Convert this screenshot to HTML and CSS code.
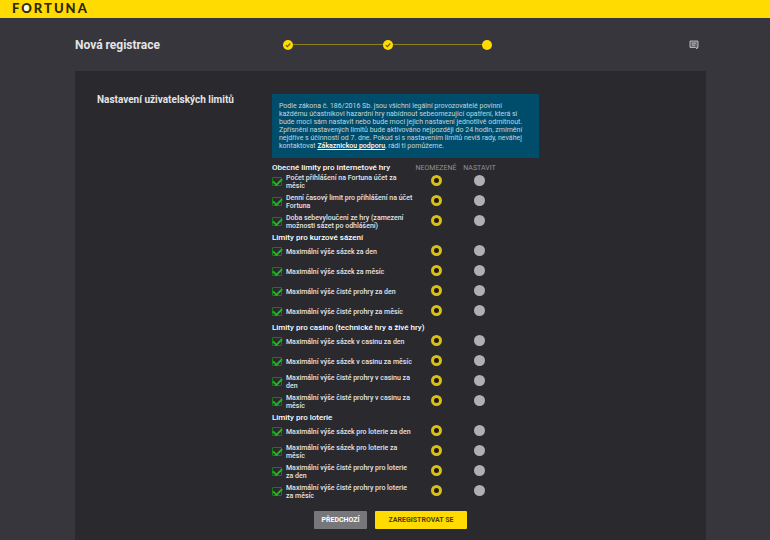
FILE: index.html
```html
<!DOCTYPE html>
<html lang="cs">
<head>
    <meta charset="UTF-8">
    <meta name="viewport" content="width=device-width, initial-scale=1.0">
    <title>Nová registrace</title>
    <link rel="stylesheet" href="styles.css">
</head>
<body>

<header class="topbar">
    <a href="#" class="logo">F<span class="logo-o">O</span>RTUNA</a>
</header>

<div class="page">
    <div class="page-head">
        <h1>Nová registrace</h1>
        <div class="steps">
            <svg class="step" viewBox="0 0 10 10"><circle cx="5" cy="5" r="5"/><path d="M2.8 5.2l1.5 1.5 3-3.2"/></svg>
            <span class="line"></span>
            <svg class="step" viewBox="0 0 10 10"><circle cx="5" cy="5" r="5"/><path d="M2.8 5.2l1.5 1.5 3-3.2"/></svg>
            <span class="line"></span>
            <svg class="step" viewBox="0 0 10 10"><circle cx="5" cy="5" r="5"/></svg>
        </div>
        <button type="button" class="chat" aria-label="Chat">
            <svg viewBox="0 0 10 10"><path d="M1 1h8v6.500H8V9L6.400 7.500H1z"/><path d="M3 3.200h4M3 5.200h3"/></svg>
        </button>
    </div>

    <form class="panel">
        <h2>Nastavení uživatelských limitů</h2>
        <div class="content">
            <p class="info">
                Podle zákona č. 186/2016 Sb. jsou všichni legální provozovatelé povinni<br>
                každému účastníkovi hazardní hry nabídnout sebeomezující opatření, která si<br>
                bude moci sám nastavit nebo bude moci jejich nastavení jednotlivě odmítnout.<br>
                Zpřísnění nastavených limitů bude aktivováno nejpozději do 24 hodin, zmírnění<br>
                nejdříve s účinností od 7. dne. Pokud si s nastavením limitů nevíš rady, neváhej<br>
                kontaktovat <a href="#">Zákaznickou podporu</a>, rádi ti pomůžeme.
            </p>

            <div class="group-head">
                <h3>Obecné limity pro internetové hry</h3>
                <span class="col">NEOMEZENĚ</span>
                <span class="col">NASTAVIT</span>
            </div>
            <div class="row">
                <input type="checkbox" id="l1" checked>
                <label for="l1">Počet přihlášení na Fortuna účet za<br>měsíc</label>
                <input type="radio" name="r1" aria-label="Neomezeně" checked>
                <input type="radio" name="r1" aria-label="Nastavit">
            </div>
            <div class="row">
                <input type="checkbox" id="l2" checked>
                <label for="l2">Denní časový limit pro přihlášení na účet<br>Fortuna</label>
                <input type="radio" name="r2" aria-label="Neomezeně" checked>
                <input type="radio" name="r2" aria-label="Nastavit">
            </div>
            <div class="row">
                <input type="checkbox" id="l3" checked>
                <label for="l3">Doba sebevyloučení ze hry (zamezení<br>možnosti sázet po odhlášení)</label>
                <input type="radio" name="r3" aria-label="Neomezeně" checked>
                <input type="radio" name="r3" aria-label="Nastavit">
            </div>

            <div class="group-head">
                <h3>Limity pro kurzové sázení</h3>
            </div>
            <div class="row">
                <input type="checkbox" id="l4" checked>
                <label for="l4">Maximální výše sázek za den</label>
                <input type="radio" name="r4" aria-label="Neomezeně" checked>
                <input type="radio" name="r4" aria-label="Nastavit">
            </div>
            <div class="row">
                <input type="checkbox" id="l5" checked>
                <label for="l5">Maximální výše sázek za měsíc</label>
                <input type="radio" name="r5" aria-label="Neomezeně" checked>
                <input type="radio" name="r5" aria-label="Nastavit">
            </div>
            <div class="row">
                <input type="checkbox" id="l6" checked>
                <label for="l6">Maximální výše čisté prohry za den</label>
                <input type="radio" name="r6" aria-label="Neomezeně" checked>
                <input type="radio" name="r6" aria-label="Nastavit">
            </div>
            <div class="row">
                <input type="checkbox" id="l7" checked>
                <label for="l7">Maximální výše čisté prohry za měsíc</label>
                <input type="radio" name="r7" aria-label="Neomezeně" checked>
                <input type="radio" name="r7" aria-label="Nastavit">
            </div>

            <div class="group-head">
                <h3>Limity pro casino (technické hry a živé hry)</h3>
            </div>
            <div class="row">
                <input type="checkbox" id="l8" checked>
                <label for="l8">Maximální výše sázek v casinu za den</label>
                <input type="radio" name="r8" aria-label="Neomezeně" checked>
                <input type="radio" name="r8" aria-label="Nastavit">
            </div>
            <div class="row">
                <input type="checkbox" id="l9" checked>
                <label for="l9">Maximální výše sázek v casinu za měsíc</label>
                <input type="radio" name="r9" aria-label="Neomezeně" checked>
                <input type="radio" name="r9" aria-label="Nastavit">
            </div>
            <div class="row">
                <input type="checkbox" id="l10" checked>
                <label for="l10">Maximální výše čisté prohry v casinu za<br>den</label>
                <input type="radio" name="r10" aria-label="Neomezeně" checked>
                <input type="radio" name="r10" aria-label="Nastavit">
            </div>
            <div class="row">
                <input type="checkbox" id="l11" checked>
                <label for="l11">Maximální výše čisté prohry v casinu za<br>měsíc</label>
                <input type="radio" name="r11" aria-label="Neomezeně" checked>
                <input type="radio" name="r11" aria-label="Nastavit">
            </div>

            <div class="group-head">
                <h3>Limity pro loterie</h3>
            </div>
            <div class="row">
                <input type="checkbox" id="l12" checked>
                <label for="l12">Maximální výše sázek pro loterie za den</label>
                <input type="radio" name="r12" aria-label="Neomezeně" checked>
                <input type="radio" name="r12" aria-label="Nastavit">
            </div>
            <div class="row">
                <input type="checkbox" id="l13" checked>
                <label for="l13">Maximální výše sázek pro loterie za<br>měsíc</label>
                <input type="radio" name="r13" aria-label="Neomezeně" checked>
                <input type="radio" name="r13" aria-label="Nastavit">
            </div>
            <div class="row">
                <input type="checkbox" id="l14" checked>
                <label for="l14">Maximální výše čisté prohry pro loterie<br>za den</label>
                <input type="radio" name="r14" aria-label="Neomezeně" checked>
                <input type="radio" name="r14" aria-label="Nastavit">
            </div>
            <div class="row">
                <input type="checkbox" id="l15" checked>
                <label for="l15">Maximální výše čisté prohry pro loterie<br>za měsíc</label>
                <input type="radio" name="r15" aria-label="Neomezeně" checked>
                <input type="radio" name="r15" aria-label="Nastavit">
            </div>

            <div class="buttons">
                <button type="button" class="btn btn-back">PŘEDCHOZÍ</button>
                <button type="submit" class="btn btn-submit">ZAREGISTROVAT SE</button>
            </div>
        </div>
    </form>
</div>

</body>
</html>
```
FILE: styles.css
```css
* {
    box-sizing: border-box;
}

body {
    display: flex;
    flex-direction: column;
    min-height: 100vh;
    margin: 0;
    background-color: #37363c;
    color: #e4e4e6;
    font-family: Roboto, "Liberation Sans", sans-serif;
    font-size: 7px;
    line-height: 8px;
}

h1, h2, h3, p {
    margin: 0;
}

button {
    border: none;
    padding: 0;
    font-family: inherit;
    cursor: pointer;
}

/* Top bar */
.topbar {
    display: flex;
    align-items: center;
    height: 18px;
    padding: 0 12px 2px;
    background-color: #ffdb01;
}

.logo {
    color: #2c2808;
    font-family: Lato, sans-serif;
    font-size: 13px;
    font-weight: 900;
    line-height: 16px;
    letter-spacing: 2px;
    text-decoration: none;
}

.logo-o {
    background: radial-gradient(circle at 5px 8px, #fff 2px, transparent 4px);
}

.page {
    display: flex;
    flex-direction: column;
    flex: 1;
    margin: 0 64px 0 75px;
}

.page-head {
    display: grid;
    grid-template-columns: 208px 209px 1fr;
    align-items: center;
    height: 53px;
    padding-right: 7px;
}

h1 {
    font-size: 12px;
    font-weight: 700;
    line-height: 16px;
}

/* Registration progress */
.steps {
    display: flex;
    align-items: center;
}

.step {
    width: 10px;
    height: 10px;
    fill: #ffdb01;
}

.step path {
    fill: none;
    stroke: #6d5f0c;
    stroke-width: 1.2;
}

.line {
    flex: 1;
    height: 1px;
    background-color: #8e7e1c;
}

.chat {
    justify-self: end;
    width: 10px;
    height: 10px;
    background: none;
}

.chat svg {
    display: block;
    fill: #69686d;
    stroke: #b4b4b7;
}

/* Form */
.panel {
    display: grid;
    grid-template-columns: 175px 1fr;
    flex: 1;
    padding: 23px 22px 11px;
    background-color: #2a292e;
}

h2 {
    font-size: 10px;
    font-weight: 700;
    line-height: 12px;
}

.info {
    width: 267px;
    padding: 8px 7px;
    margin-bottom: 5px;
    background-color: #004d6b;
    color: #c3d6de;
    white-space: nowrap;
}

.info a {
    color: #fff;
    font-weight: 500;
}

.group-head,
.row {
    display: grid;
    grid-template-columns: 14px 129px 42px 45px;
    align-items: center;
}

.group-head {
    height: 10px;
}

h3 {
    grid-column: 1 / 3;
    color: #fff;
    font-size: 8px;
    font-weight: 500;
    white-space: nowrap;
}

.col {
    color: #929296;
    text-align: center;
}

.row {
    min-height: 20px;
    padding-bottom: 3px;
}

.row label {
    font-weight: 500;
    white-space: nowrap;
}

.row input {
    appearance: none;
    margin: 0;
}

.row input[type="checkbox"] {
    width: 10px;
    height: 9px;
    border: 1px solid #167d16;
    border-radius: 1px;
}

/* Tick */
.row input[type="checkbox"]:checked::before {
    content: "";
    display: block;
    width: 7px;
    height: 4px;
    border: solid #1eb81e;
    border-width: 0 0 2px 2px;
    transform: rotate(-45deg);
}

.row input[type="radio"] {
    align-self: start;
    justify-self: center;
    width: 11px;
    height: 11px;
    margin-top: 2px;
    border-radius: 50%;
    background-color: #b0b0b3;
}

.row input[type="radio"]:checked {
    border: 3px solid #dcc010;
    background-color: #1c1b20;
}

.buttons {
    display: flex;
    gap: 8px;
    padding: 8px 0 0 42px;
}

.btn {
    height: 18px;
    border-radius: 1px;
    font-size: 7px;
    font-weight: 700;
}

.btn-back {
    width: 53px;
    background-color: #77777b;
    color: #fff;
}

.btn-submit {
    width: 92px;
    background-color: #ffdb01;
    color: #4a4008;
}
```
